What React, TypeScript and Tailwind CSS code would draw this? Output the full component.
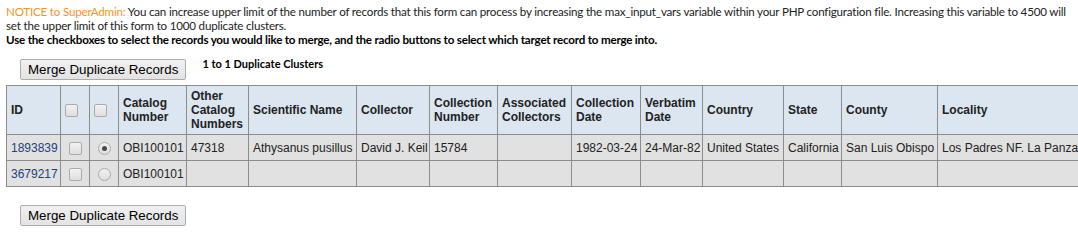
import React from "react";

const cols = [54, 29, 29, 68, 62, 108, 73, 68, 74, 69, 62, 81, 58, 96, 160];

const Box: React.FC = () => (
  <span className="inline-block w-[13px] h-[13px] rounded-[2px] border border-[#ababab] bg-gradient-to-b from-[#f2f2f2] to-[#dedede] align-middle" />
);

const Radio: React.FC<{ checked?: boolean }> = ({ checked }) => (
  <span className="inline-flex w-[13px] h-[13px] rounded-full border border-[#ababab] bg-gradient-to-b from-[#f2f2f2] to-[#dedede] items-center justify-center align-middle">
    {checked && <span className="w-[5px] h-[5px] rounded-full bg-[#4a4a4a]" />}
  </span>
);

const Button: React.FC = () => (
  <button className="h-[21px] px-[7px] border border-[#adadad] rounded-[2px] bg-gradient-to-b from-[#f0f0f0] to-[#e3e3e3] text-[13.33px] leading-none text-black font-['Liberation_Sans',Arial,sans-serif]">
    Merge Duplicate Records
  </button>
);

const headers = [
  "ID",
  "",
  "",
  "Catalog Number",
  "Other Catalog Numbers",
  "Scientific Name",
  "Collector",
  "Collection Number",
  "Associated Collectors",
  "Collection Date",
  "Verbatim Date",
  "Country",
  "State",
  "County",
  "Locality",
];

const rows = [
  {
    id: "1893839",
    checked: true,
    cells: [
      "OBI100101",
      "47318",
      "Athysanus pusillus",
      "David J. Keil",
      "15784",
      "",
      "1982-03-24",
      "24-Mar-82",
      "United States",
      "California",
      "San Luis Obispo",
      "Los Padres NF. La Panza",
    ],
  },
  {
    id: "3679217",
    checked: false,
    cells: ["OBI100101", "", "", "", "", "", "", "", "", "", "", ""],
  },
];

export default function App() {
  return (
    <div className="w-[1078px] h-[250px] overflow-hidden bg-white px-[6px] pt-[5px]">
      {/* notice */}
      <div className="font-['Lato',sans-serif] text-[11.6px] leading-[14px] text-[#222] tracking-[-0.2px]">
        <div className="whitespace-nowrap">
          <span className="text-[#f7941d]">NOTICE to SuperAdmin:</span> You can increase upper limit of the number
          of records that this form can process by increasing the max_input_vars variable within your PHP
          configuration file. Increasing this variable to 4500 will
        </div>
        <div>set the upper limit of this form to 1000 duplicate clusters.</div>
        <div className="font-bold text-black whitespace-nowrap">
          Use the checkboxes to select the records you would like to merge, and the radio buttons to select which
          target record to merge into.
        </div>
      </div>

      <div className="flex items-start mt-[12px] pl-[14px]">
        <Button />
        <span className="ml-[16px] mt-[-2px] font-['Lato',sans-serif] font-bold text-[11px] leading-[14px] text-black">
          1 to 1 Duplicate Clusters
        </span>
      </div>

      <table className="mt-[5px] table-fixed border-collapse font-['Liberation_Sans',Arial,sans-serif] text-[12px] leading-[14px] text-[#222] w-[1091px]">
        <colgroup>
          {cols.map((w, i) => (
            <col key={i} style={{ width: w }} />
          ))}
        </colgroup>
        <thead>
          <tr className="h-[49px] bg-[#dce6f1]">
            {headers.map((h, i) => (
              <th
                key={i}
                className={
                  "border border-[#8c8c8c] px-[4px] py-0 text-left font-bold align-middle " +
                  (i === 1 || i === 2 ? "text-center" : "")
                }
              >
                {i === 1 || i === 2 ? <Box /> : h}
              </th>
            ))}
          </tr>
        </thead>
        <tbody>
          {rows.map((r) => (
            <tr key={r.id} className="h-[26px] bg-[#e1e1e1]">
              <td className="border border-[#8c8c8c] px-[4px] text-[#23427d] whitespace-nowrap">{r.id}</td>
              <td className="border border-[#8c8c8c] text-center">
                <Box />
              </td>
              <td className="border border-[#8c8c8c] text-center">
                <Radio checked={r.checked} />
              </td>
              {r.cells.map((c, i) => (
                <td key={i} className="border border-[#8c8c8c] px-[4px] whitespace-nowrap">
                  {c}
                </td>
              ))}
            </tr>
          ))}
        </tbody>
      </table>

      <div className="flex mt-[18px] pl-[14px]">
        <Button />
      </div>
    </div>
  );
}
